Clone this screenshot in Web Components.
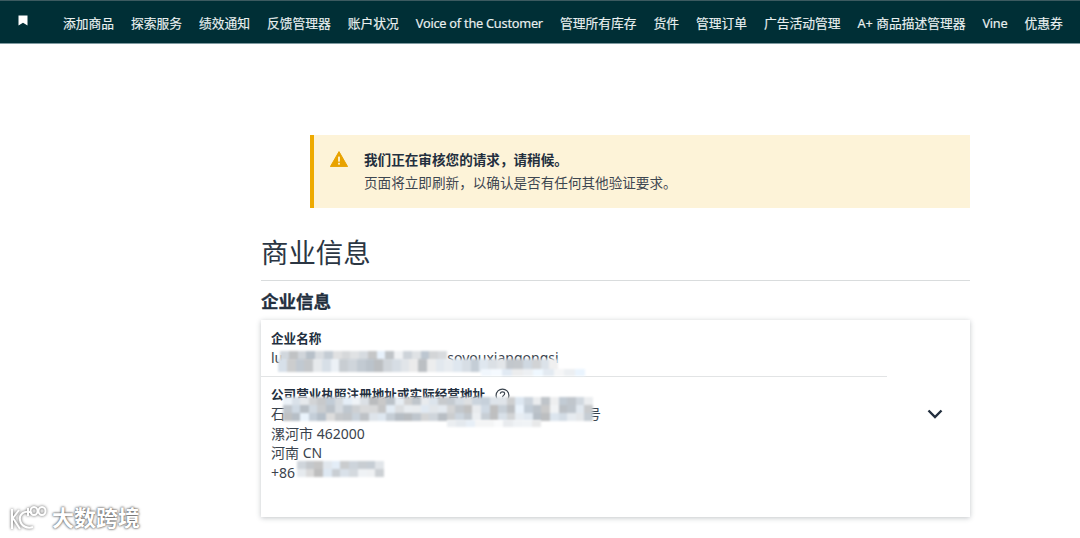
<!DOCTYPE html>
<html lang="zh">
<head>
<meta charset="utf-8">
<title>商业信息</title>
<style>
html, body { margin: 0; height: 538px; overflow: hidden; background: #fff; }
body { font-family: "Noto Sans", "Noto Sans CJK SC", sans-serif; color: #232f3e; position: relative; }
</style>
</head>
<body>

<seller-nav>
    <a>添加商品</a><a>探索服务</a><a>绩效通知</a><a>反馈管理器</a><a>账户状况</a>
    <a class="en">Voice of the Customer</a><a>管理所有库存</a><a>货件</a><a>管理订单</a>
    <a>广告活动管理</a><a>A+ 商品描述管理器</a><a class="en">Vine</a><a>优惠券</a>
</seller-nav>

<page-main>
    <alert-box heading="我们正在审核您的请求，请稍候。">页面将立即刷新，以确认是否有任何其他验证要求。</alert-box>
    <page-title>商业信息</page-title>
    <section-title>企业信息</section-title>
    <info-card>
        <info-row label="企业名称" slot="top">
            <div>lu<span style="display:inline-block;width:164px"></span>soyouxiangongsi</div>
            <pixel-blur seed="7" cols="19" rows="1" style="left:19px;top:31px;width:167px;height:10px"></pixel-blur>
            <pixel-blur seed="11" cols="32" rows="1" style="left:17px;top:39px;width:280px;height:13px"></pixel-blur>
            <pixel-blur seed="13" cols="10" rows="1" pale style="left:220px;top:49px;width:104px;height:7px"></pixel-blur>
        </info-row>
        <info-row label="公司营业执照注册地址或实际经营地址" help slot="bottom">
            <div>石<span style="display:inline-block;width:302px"></span>号</div>
            <div>漯河市 462000</div>
            <div>河南 CN</div>
            <div>+86</div>
            <pixel-blur seed="19" cols="36" rows="3" style="left:22px;top:20px;width:310px;height:24px"></pixel-blur>
            <pixel-blur seed="27" cols="10" rows="1" pale style="left:186px;top:43px;width:94px;height:7px"></pixel-blur>
            <pixel-blur seed="31" cols="10" rows="2" style="left:36px;top:84px;width:87px;height:16px"></pixel-blur>
        </info-row>
    </info-card>
</page-main>

<water-mark>大数跨境</water-mark>

<script>
class SellerNav extends HTMLElement {
    constructor() {
        super();
        this.attachShadow({ mode: 'open' }).innerHTML = `
            <style>
            :host {
                display: flex;
                align-items: center;
                box-sizing: border-box;
                height: 44px;
                background: #002f36;
                border-top: 1px solid #3c5a60;
                border-bottom: 1px solid #7f9aa0;
                padding-left: 18px;
                white-space: nowrap;
                overflow: hidden;
            }
            svg { width: 10px; height: 11px; margin-right: 35px; margin-top: -3px; flex: none; }
            .links { display: flex; align-items: baseline; gap: 17px; padding-top: 1px; }
            ::slotted(a) { color: #e9f0f0; font-size: 12.75px; line-height: 20px; -webkit-text-stroke: .15px #e9f0f0; }
            ::slotted(a.en) { letter-spacing: -.24px; }
            </style>
            <svg viewBox="0 0 10 11"><path d="M0.5 0.5h9v10L5 7.8 0.5 10.5z" fill="#fff"/></svg>
            <div class="links"><slot></slot></div>
        `;
    }
}

class PageMain extends HTMLElement {
    constructor() {
        super();
        this.attachShadow({ mode: 'open' }).innerHTML = `
            <style>
            :host {
                display: flex;
                flex-direction: column;
                width: 709px;
                margin-left: 261px;
                padding-top: 91px;
            }
            </style>
            <slot></slot>
        `;
    }
}

class AlertBox extends HTMLElement {
    constructor() {
        super();
        this.attachShadow({ mode: 'open' }).innerHTML = `
            <style>
            :host {
                display: flex;
                box-sizing: border-box;
                height: 73px;
                margin-left: 49px;
                padding: 13px 0 0 16px;
                gap: 16px;
                background: #fdf3d8;
                border-left: 4px solid #eeaa00;
                font-size: 13.6px;
                line-height: 23px;
            }
            svg { width: 18px; height: 16px; margin-top: 3px; flex: none; }
            h4 { margin: 0; font-size: inherit; font-weight: 700; color: #232f3e; }
            .body { color: #3d4650; }
            </style>
            <svg viewBox="0 0 18 16">
                <path d="M9 0.6 17.600 15.600H0.4z" fill="#e8a200" stroke="#e8a200" stroke-linejoin="round"/>
                <rect x="8.100" y="5.600" width="1.800" height="5" fill="#fdf3d8"/>
                <rect x="8.100" y="11.800" width="1.800" height="1.800" fill="#fdf3d8"/>
            </svg>
            <div>
                <h4></h4>
                <div class="body"><slot></slot></div>
            </div>
        `;
    }
    connectedCallback() {
        this.shadowRoot.querySelector('h4').textContent = this.getAttribute('heading') || '';
    }
}

class PageTitle extends HTMLElement {
    constructor() {
        super();
        this.attachShadow({ mode: 'open' }).innerHTML = `
            <style>
            :host {
                display: block;
                box-sizing: border-box;
                height: 73px;
                padding-top: 24px;
                border-bottom: 1px solid #d9dcdd;
                font-size: 27.4px;
                line-height: 42px;
                color: #2b3643;
            }
            </style>
            <slot></slot>
        `;
    }
}

class SectionTitle extends HTMLElement {
    constructor() {
        super();
        this.attachShadow({ mode: 'open' }).innerHTML = `
            <style>
            :host {
                display: block;
                height: 39px;
                font-size: 17.5px;
                font-weight: 700;
                line-height: 40px;
                color: #232f3e;
                -webkit-text-stroke: .3px #232f3e;
            }
            </style>
            <slot></slot>
        `;
    }
}

class InfoCard extends HTMLElement {
    constructor() {
        super();
        this.attachShadow({ mode: 'open' }).innerHTML = `
            <style>
            :host {
                display: block;
                box-sizing: border-box;
                height: 197px;
                background: #fff;
                box-shadow: 0 1px 5px rgba(40, 50, 60, .28);
            }
            .top { height: 56px; margin-right: 83px; border-bottom: 1px solid #e2e4e5; }
            .bottom { display: flex; }
            .bottom > div { flex: 1; }
            svg { width: 16px; height: 10px; margin: 32px 27px 0 0; flex: none; }
            </style>
            <div class="top"><slot name="top"></slot></div>
            <div class="bottom">
                <div><slot name="bottom"></slot></div>
                <svg viewBox="0 0 16 10"><path d="M1.500 1.500 8 8l6.500-6.500" fill="none" stroke="#232f3e" stroke-width="2.400"/></svg>
            </div>
        `;
    }
}

class InfoRow extends HTMLElement {
    constructor() {
        super();
        this.attachShadow({ mode: 'open' }).innerHTML = `
            <style>
            :host {
                display: block;
                position: relative;
                padding: 9px 0 0 10px;
                font-size: 14px;
                line-height: 19.5px;
                color: #3a434d;
            }
            .label { display: flex; align-items: center; gap: 10px; height: 19px; font-weight: 700; font-size: 12.6px; color: #232f3e; }
            :host([help]) .label { height: 18px; }
            svg { width: 15px; height: 15px; display: none; }
            :host([help]) svg { display: block; }
            </style>
            <div class="label">
                <span></span>
                <svg viewBox="0 0 14 14">
                    <circle cx="7" cy="7" r="6" fill="none" stroke="#3a434d" stroke-width="1.100"/>
                    <path d="M5 5.400C5 2.900 9 3 9 5.300 9 6.900 7 6.900 7 8.600" fill="none" stroke="#3a434d" stroke-width="1.100"/>
                    <circle cx="7" cy="10.400" r=".8" fill="#3a434d"/>
                </svg>
            </div>
            <slot></slot>
        `;
    }
    connectedCallback() {
        this.shadowRoot.querySelector('.label span').textContent = this.getAttribute('label') || '';
    }
}

// mosaic patch that hides private details, colours come from a small seeded generator
class PixelBlur extends HTMLElement {
    constructor() {
        super();
        this.attachShadow({ mode: 'open' }).innerHTML = `
            <style>
            :host {
                display: grid;
                position: absolute;
                filter: blur(1.2px);
                pointer-events: none;
            }
            i { display: block; }
            </style>
        `;
    }
    connectedCallback() {
        const cols = +this.getAttribute('cols');
        const rows = +this.getAttribute('rows');
        const base = this.hasAttribute('pale') ? 232 : 188;
        const range = this.hasAttribute('pale') ? 20 : 56;
        let s = +this.getAttribute('seed');
        const rand = () => (s = (s * 9301 + 49297) % 233280) / 233280;
        this.style.gridTemplateColumns = `repeat(${cols}, 1fr)`;
        this.style.gridTemplateRows = `repeat(${rows}, 1fr)`;
        const root = this.shadowRoot;
        for (let i = 0; i < cols * rows; i++) {
            const cell = document.createElement('i');
            const g = base + Math.round(rand() * range);
            const tint = Math.round(rand() * 10);
            cell.style.background = `rgb(${g - tint},${g},${g + tint})`;
            root.appendChild(cell);
        }
    }
}

class WaterMark extends HTMLElement {
    constructor() {
        super();
        this.attachShadow({ mode: 'open' }).innerHTML = `
            <style>
            :host {
                position: absolute;
                left: 9px;
                top: 502px;
                display: flex;
                align-items: center;
                gap: 5px;
                font-size: 22px;
                font-weight: 700;
                line-height: 30px;
                color: #fff;
                text-shadow: 0 0 2px #555, 0 0 3px #777;
            }
            svg { width: 38px; height: 28px; overflow: visible; filter: drop-shadow(0 0 1.5px #555); }
            </style>
            <svg viewBox="0 0 38 28" fill="none" stroke="#fff" stroke-width="2">
                <path d="M3 6v20"/>
                <path d="M10 7 4 15l7 11"/>
                <path d="M23 10C15 6 10 12 11 17c1 6 7 9 13 7"/>
                <path d="M19 5v8"/>
                <ellipse cx="25" cy="8" rx="3.500" ry="4"/>
                <ellipse cx="33" cy="8" rx="3.500" ry="4"/>
            </svg>
            <slot></slot>
        `;
    }
}

customElements.define('seller-nav', SellerNav);
customElements.define('page-main', PageMain);
customElements.define('alert-box', AlertBox);
customElements.define('page-title', PageTitle);
customElements.define('section-title', SectionTitle);
customElements.define('info-card', InfoCard);
customElements.define('info-row', InfoRow);
customElements.define('pixel-blur', PixelBlur);
customElements.define('water-mark', WaterMark);
</script>
</body>
</html>
